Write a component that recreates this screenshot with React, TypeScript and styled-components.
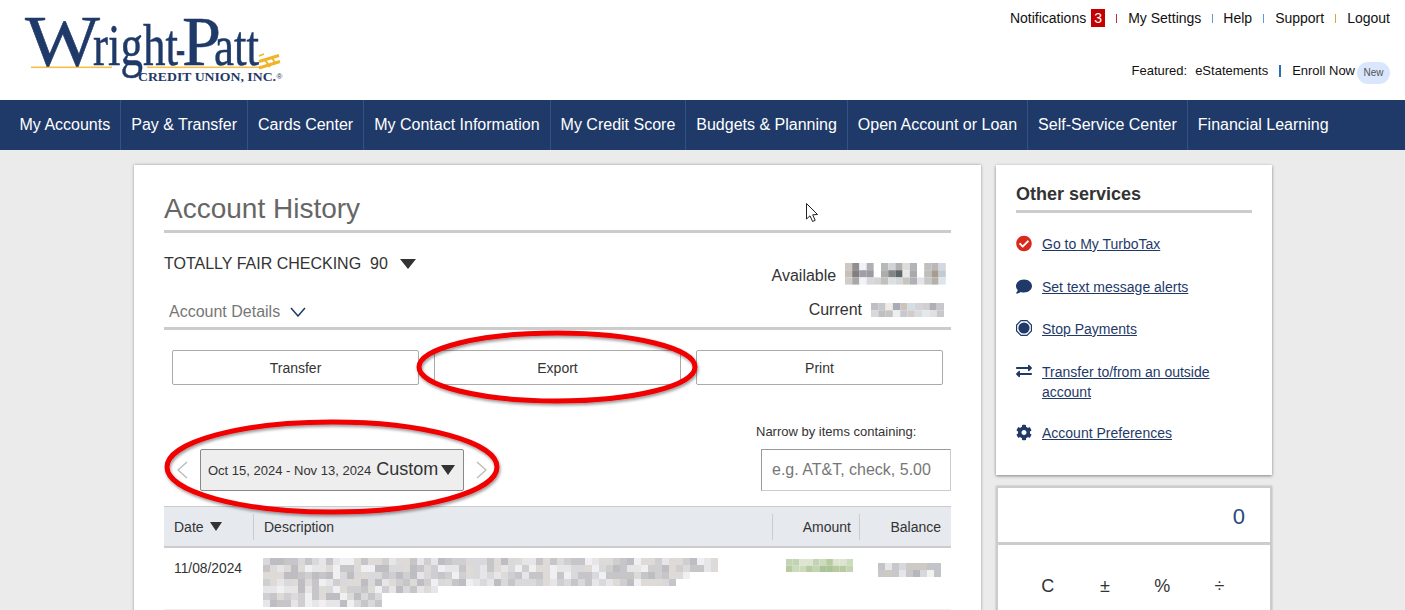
import React from "react";
import styled, { createGlobalStyle } from "styled-components";
import { FaCheckCircle, FaComment, FaExchangeAlt, FaCog } from "react-icons/fa";

const Global = createGlobalStyle`
  html, body { margin: 0; padding: 0; height: 610px; overflow: hidden; background: #ebebeb; }
  body { font-family: "Liberation Sans", Arial, sans-serif; color: #333; }
  * { box-sizing: border-box; }
`;

const Page = styled.div`
  position: relative;
  width: 1405px;
  height: 610px;
  overflow: hidden;
`;

const Header = styled.header`
  height: 100px;
  background: #fff;
  display: flex;
  justify-content: space-between;
  padding-right: 15px;
`;

const LogoSvg = styled.svg`
  display: block;
  width: 300px;
  height: 100px;
  flex: none;
`;

const HeaderRight = styled.div`
  display: flex;
  flex-direction: column;
  align-items: flex-end;
`;

const TopLinks = styled.div`
  display: flex;
  align-items: center;
  height: 18px;
  margin-top: 9px;
  font-size: 14px;
  color: #111;
`;

const Badge = styled.span`
  display: inline-flex;
  align-items: center;
  justify-content: center;
  width: 14px;
  height: 18px;
  margin-left: 5px;
  background: #c40000;
  color: #fff;
  font-size: 14px;
`;

const Tick = styled.span<{ $color: string; $gap?: number }>`
  display: block;
  width: 1px;
  height: 9px;
  margin: 0 ${(p) => p.$gap ?? 11}px;
  background: ${(p) => p.$color};
`;

const FeaturedRow = styled.div`
  display: flex;
  align-items: flex-start;
  margin-top: 35px;
  height: 22px;
  font-size: 13px;
  line-height: 18px;
  color: #111;
`;

const FeaturedLabel = styled.span`
  margin-right: 8px;
`;

const Pipe = styled.span`
  width: 2px;
  height: 12px;
  margin: 3px 11px 0;
  background: #2b6cb0;
`;

const NewPill = styled.span`
  display: inline-flex;
  align-items: center;
  justify-content: center;
  width: 33px;
  height: 22px;
  margin-left: 2px;
  border-radius: 11px;
  background: #d9e6fb;
  color: #555;
  font-size: 10px;
`;

const Nav = styled.nav`
  height: 50px;
  background: #1f3a68;
  display: flex;
  padding-left: 9.5px;
`;

const NavItem = styled.a`
  display: flex;
  align-items: center;
  padding: 0 10px;
  color: #fff;
  font-size: 16px;
  white-space: nowrap;
  border-right: 1px solid #2f5288;
  &:last-child { border-right: 0; }
`;

const Content = styled.main`
  display: flex;
  align-items: flex-start;
  gap: 15px;
  padding: 15px 0 0 134px;
`;

const MainCard = styled.section`
  width: 847px;
  height: 600px;
  flex: none;
  background: #fff;
  padding: 26px 30px 0;
  box-shadow: 0 0 3px rgba(0, 0, 0, 0.35);
`;

const Title = styled.h1`
  margin: 0;
  height: 42px;
  font-size: 28px;
  line-height: 36px;
  font-weight: 400;
  color: #666;
  border-bottom: 3px solid #ccc;
`;

const AccountBlock = styled.div`
  display: flex;
  justify-content: space-between;
  height: 97px;
  border-bottom: 3px solid #ccc;
`;

const AccountLeft = styled.div`
  display: flex;
  flex-direction: column;
`;

const AccountName = styled.div`
  display: flex;
  align-items: center;
  margin-top: 22px;
  height: 18px;
  font-size: 16px;
  color: #333;
  white-space: pre;
`;

const Triangle = styled.span<{ $w: number; $h: number; $ml: number }>`
  display: inline-block;
  width: 0;
  height: 0;
  margin-left: ${(p) => p.$ml}px;
  border-left: ${(p) => p.$w / 2}px solid transparent;
  border-right: ${(p) => p.$w / 2}px solid transparent;
  border-top: ${(p) => p.$h}px solid #333;
`;

const DetailsToggle = styled.div`
  display: flex;
  align-items: center;
  gap: 10px;
  margin-top: 30px;
  padding-left: 5px;
  height: 18px;
  font-size: 16px;
  color: #777;
`;

const Balances = styled.div`
  display: flex;
  flex-direction: column;
  align-items: flex-end;
  padding-top: 30px;
`;

const BalanceLine = styled.div<{ $mt: number; $pr: number; $align: string }>`
  display: flex;
  align-items: ${(p) => p.$align};
  gap: 9px;
  margin-top: ${(p) => p.$mt}px;
  padding-right: ${(p) => p.$pr}px;
  font-size: 16px;
  line-height: 18px;
  color: #333;
`;

const Actions = styled.div`
  display: flex;
  gap: 15px;
  padding: 0 8px;
  margin-top: 20px;
`;

const ActionButton = styled.button`
  width: 247px;
  height: 35px;
  padding: 0;
  background: #fff;
  border: 1px solid #aaa;
  border-radius: 2px;
  font: 14px "Liberation Sans", Arial, sans-serif;
  color: #333;
`;

const FilterRow = styled.div`
  display: flex;
  justify-content: space-between;
  align-items: flex-end;
  margin-top: 39px;
  height: 67px;
`;

const RangeGroup = styled.div`
  display: flex;
  align-items: center;
  height: 42px;
  padding-left: 13px;
  gap: 12px;
`;

const RangeButton = styled.button`
  display: flex;
  align-items: center;
  width: 264px;
  height: 42px;
  padding: 0 0 0 7px;
  background: #eee;
  border: 1px solid #888;
  border-radius: 2px;
  font-family: "Liberation Sans", Arial, sans-serif;
  color: #333;
  white-space: nowrap;
`;

const RangeDates = styled.span`
  font-size: 13px;
  margin-right: 5px;
`;

const RangeName = styled.span`
  font-size: 18px;
  margin-top: -1px;
`;

const SearchGroup = styled.div`
  display: flex;
  flex-direction: column;
  align-items: flex-end;
`;

const SearchLabel = styled.label`
  font-size: 13px;
  width: 195px;
  height: 25px;
  line-height: 15px;
  color: #333;
  white-space: nowrap;
`;

const SearchInput = styled.input`
  width: 190px;
  height: 42px;
  padding: 0 0 0 10px;
  border: 1px solid #ccc;
  border-top: 1px solid #999;
  border-left: 1px solid #999;
  font: 16px "Liberation Sans", Arial, sans-serif;
  &::placeholder { color: #777; opacity: 1; }
`;

const TableHead = styled.div`
  display: grid;
  grid-template-columns: 90px 519px 87px 1fr;
  align-items: center;
  height: 42px;
  margin-top: 15px;
  background: #e6e9ee;
  border-top: 1px solid #ccc;
  border-bottom: 2px solid #ccc;
  font-size: 14px;
  color: #333;
`;

const HeadCell = styled.div<{ $right?: number; $divider?: boolean }>`
  display: flex;
  align-items: center;
  height: 26px;
  padding: 0 ${(p) => p.$right ?? 10}px 0 10px;
  justify-content: ${(p) => (p.$right ? "flex-end" : "flex-start")};
  border-right: ${(p) => (p.$divider ? "1px solid #ccc" : "0")};
`;

const TableRow = styled.div`
  display: grid;
  grid-template-columns: 99px 523px 92px 1fr;
  height: 62px;
  border-bottom: 1px solid #eee;
  font-size: 13.8px;
  color: #333;
`;

const DateCell = styled.div`
  padding: 13px 0 0 10px;
`;

const MosaicCell = styled.div<{ $pt: number }>`
  padding-top: ${(p) => p.$pt}px;
`;

const Side = styled.aside`
  display: flex;
  flex-direction: column;
  gap: 11px;
  width: 276px;
  flex: none;
`;

const ServicesCard = styled.section`
  height: 310px;
  background: #fff;
  padding: 19px 20px 0;
  box-shadow: 0 1px 3px rgba(0, 0, 0, 0.45);
`;

const ServicesTitle = styled.h2`
  margin: 0 0 21px;
  height: 29px;
  font-size: 18px;
  line-height: 20px;
  font-weight: 700;
  color: #333;
  border-bottom: 3px solid #ccc;
`;

const ServiceList = styled.ul`
  list-style: none;
  margin: 0;
  padding: 0;
`;

const ServiceItem = styled.li<{ $mb: number }>`
  display: flex;
  align-items: flex-start;
  gap: 10px;
  margin-bottom: ${(p) => p.$mb}px;
  font-size: 14px;
  line-height: 20px;
`;

const ServiceIcon = styled.span<{ $color?: string; $size?: number }>`
  display: flex;
  width: 16px;
  height: 18px;
  flex: none;
  align-items: center;
  justify-content: center;
  color: ${(p) => p.$color ?? "#1f3a68"};
  font-size: ${(p) => p.$size ?? 16}px;
`;

const ServiceLink = styled.a`
  color: #1f3a68;
  text-decoration: underline;
`;

const CalcCard = styled.section`
  height: 140px;
  background: #fff;
  border: 2px solid #ccc;
  border-bottom: 0;
  box-shadow: 0 0 2px rgba(0, 0, 0, 0.25);
`;

const CalcDisplay = styled.div`
  height: 57px;
  padding: 16px 25px 0 0;
  text-align: right;
  font-size: 22px;
  line-height: 26px;
  color: #1f4a80;
  border-bottom: 3px solid #ccc;
`;

const CalcKeys = styled.div`
  display: grid;
  grid-template-columns: repeat(4, 57.3px);
  padding: 30px 0 0 21px;
  font-size: 18px;
  line-height: 22px;
  color: #333;
`;

const CalcKey = styled.span`
  text-align: center;
`;

const Overlay = styled.svg`
  position: absolute;
  inset: 0;
  width: 1405px;
  height: 610px;
  pointer-events: none;
`;

function makeRand(seed: number) {
  let s = seed;
  return () => {
    s = (s * 16807) % 2147483647;
    return (s - 1) / 2147483646;
  };
}

function Mosaic({ rows, cell = 7, seed, palette }: { rows: [number, number][]; cell?: number; seed: number; palette: string[] }) {
  const rand = makeRand(seed);
  const width = Math.max(...rows.map((r) => r[0] + r[1])) * cell;
  return (
    <svg width={width} height={rows.length * cell} style={{ display: "block", flex: "none" }} aria-hidden>
      {rows.map(([start, count], y) =>
        Array.from({ length: count }, (_, i) => (
          <rect
            key={`${y}-${i}`}
            x={(start + i) * cell}
            y={y * cell}
            width={cell}
            height={cell}
            fill={palette[Math.floor(rand() * palette.length)]}
          />
        ))
      )}
    </svg>
  );
}

function ColorGrid({ grid, cell }: { grid: string[][]; cell: number }) {
  return (
    <svg width={grid[0].length * cell} height={grid.length * cell} style={{ display: "block", flex: "none" }} aria-hidden>
      {grid.map((row, y) =>
        row.map((c, x) => <rect key={`${y}-${x}`} x={x * cell} y={y * cell} width={cell} height={cell} fill={c} />)
      )}
    </svg>
  );
}

const availableGrid = [
  ["#cfc8c2", "#8f8f90", "#f0f2f5", "#aeb0b6", "#ffffff", "#b9b8b8", "#d0d3d8", "#b0b0b0", "#e0dcd8", "#b0b4b8", "#ffffff", "#c0c0c0", "#b8b8b8", "#d4d8de"],
  ["#c8c0b8", "#7f7f7f", "#a0a0a4", "#9a9aa0", "#ffffff", "#adadad", "#858585", "#5f6668", "#e8e8e8", "#aaaaaa", "#ffffff", "#c0bdbb", "#a89c90", "#c0ccd4"],
  ["#d0ccc8", "#a8a8a8", "#f0f4fa", "#d8d8dc", "#d4d4d4", "#c0c0bc", "#dcdfe0", "#d4d8d8", "#c8c4be", "#b0b0b8", "#e4e4e4", "#c4c8c8", "#b4b0ac", "#dfe4ea"],
];

const currentGrid = [
  ["#bcc0c4", "#c8c8cc", "#f0ece4", "#a8acb8", "#ccc4bc", "#d4dce4", "#d4d4d8", "#d0d0d4", "#b0b0b4", "#c8c8cc"],
  ["#d8d8d8", "#c0c0c0", "#c4c4c4", "#eeeeee", "#c8c8d0", "#d4ccc8", "#d8dce0", "#e4e8ec", "#e0e0e0", "#c8c8cc"],
];

const greyMid = ["#c2c4c8", "#d6d8dc", "#e4e6ea", "#b4b8bd", "#cfc9c4", "#c8c8ca", "#f4f2ee"];
const greyLight = ["#d9d9dc", "#e6e6e8", "#cfcfd2", "#f0f0f2", "#c6c6c8", "#dedad8", "#bdbdc2"];
const greens = ["#c2d4b4", "#dde4cf", "#8fb07d", "#b8cba0", "#a9c497", "#cbdcbc"];

const navItems = [
  "My Accounts", "Pay & Transfer", "Cards Center", "My Contact Information", "My Credit Score",
  "Budgets & Planning", "Open Account or Loan", "Self-Service Center", "Financial Learning",
];

function Logo() {
  return (
    <LogoSvg viewBox="0 0 300 100" aria-label="Wright-Patt Credit Union, Inc.">
      <rect x="31" y="66.5" width="81" height="1.6" fill="#f4c14d" />
      <rect x="147" y="66.5" width="114" height="1.6" fill="#f4c14d" />
      <text
        y="64.5"
        fontFamily="'Liberation Serif', serif"
        fill="#1f3a68"
        stroke="#1f3a68"
        strokeWidth="0.5"
      >
        <tspan x="25" fontSize="72" textLength="75" lengthAdjust="spacingAndGlyphs">W</tspan>
        <tspan x="93" fontSize="60" textLength="85" lengthAdjust="spacingAndGlyphs">right</tspan>
        <tspan x="176" fontSize="50" textLength="9" lengthAdjust="spacingAndGlyphs">-</tspan>
        <tspan x="182" fontSize="70" textLength="39" lengthAdjust="spacingAndGlyphs">P</tspan>
        <tspan x="214" fontSize="58" textLength="45" lengthAdjust="spacingAndGlyphs">att</tspan>
      </text>
      <text x="138" y="81" fontFamily="'Liberation Serif', serif" fontSize="13.5" fontWeight="700" fill="#1f3a68" textLength="138" lengthAdjust="spacingAndGlyphs">CREDIT UNION, INC.</text>
      <text x="276.5" y="78.5" fontFamily="'Liberation Sans', sans-serif" fontSize="8" fill="#1f3a68">®</text>
      <g stroke="#f0b429" fill="none">
        <path d="M259 61.5 L279 55.5" strokeWidth="3" />
        <path d="M259 68 L280 61.5" strokeWidth="3" />
        <path d="M265 60 L270 67" strokeWidth="2" />
        <path d="M272 58 L276 64" strokeWidth="2" />
        <path d="M259 56 L264 54" strokeWidth="1.4" />
      </g>
    </LogoSvg>
  );
}

function Chevron({ dir, color, w = 11, h = 18 }: { dir: "left" | "right"; color: string; w?: number; h?: number }) {
  const d = dir === "left" ? `M${w - 1} 1 L1 ${h / 2} L${w - 1} ${h - 1}` : `M1 1 L${w - 1} ${h / 2} L1 ${h - 1}`;
  return (
    <svg width={w} height={h} style={{ flex: "none" }} aria-hidden>
      <path d={d} fill="none" stroke={color} strokeWidth="1.4" />
    </svg>
  );
}

function StopIcon() {
  return (
    <svg width="16" height="16" viewBox="0 0 16 16" aria-hidden>
      <path d="M5 .6h6L15.4 5v6L11 15.4H5L.6 11V5z" fill="none" stroke="#1f3a68" strokeWidth="1.2" />
      <circle cx="8" cy="8" r="5.6" fill="#1f3a68" />
    </svg>
  );
}

export default function App() {
  return (
    <Page>
      <Global />
      <Header>
        <Logo />
        <HeaderRight>
          <TopLinks>
            <span>Notifications</span>
            <Badge>3</Badge>
            <Tick $color="#b03050" />
            <span>My Settings</span>
            <Tick $color="#5b9bd5" $gap={10.5} />
            <span>Help</span>
            <Tick $color="#5b9bd5" $gap={11} />
            <span>Support</span>
            <Tick $color="#e0a040" $gap={11} />
            <span>Logout</span>
          </TopLinks>
          <FeaturedRow>
            <FeaturedLabel>Featured:</FeaturedLabel>
            <span>eStatements</span>
            <Pipe />
            <span>Enroll Now</span>
            <NewPill>New</NewPill>
          </FeaturedRow>
        </HeaderRight>
      </Header>
      <Nav>
        {navItems.map((n) => (
          <NavItem key={n}>{n}</NavItem>
        ))}
      </Nav>
      <Content>
        <MainCard>
          <Title>Account History</Title>
          <AccountBlock>
            <AccountLeft>
              <AccountName>
                TOTALLY FAIR CHECKING  90
                <Triangle $w={16} $h={10} $ml={12} />
              </AccountName>
              <DetailsToggle>
                Account Details
                <svg width="16" height="10" aria-hidden>
                  <path d="M1 1 L8 9 L15 1" fill="none" stroke="#1f3a68" strokeWidth="1.5" />
                </svg>
              </DetailsToggle>
            </AccountLeft>
            <Balances>
              <BalanceLine $mt={0} $pr={5} $align="flex-end">
                Available
                <ColorGrid grid={availableGrid} cell={7.2} />
              </BalanceLine>
              <BalanceLine $mt={16.5} $pr={7} $align="center">
                Current
                <ColorGrid grid={currentGrid} cell={7.3} />
              </BalanceLine>
            </Balances>
          </AccountBlock>
          <Actions>
            <ActionButton>Transfer</ActionButton>
            <ActionButton>Export</ActionButton>
            <ActionButton>Print</ActionButton>
          </Actions>
          <FilterRow>
            <RangeGroup>
              <Chevron dir="left" color="#bbb" />
              <RangeButton>
                <RangeDates>Oct 15, 2024 - Nov 13, 2024</RangeDates>
                <RangeName>Custom</RangeName>
                <Triangle $w={14} $h={10} $ml={3} />
              </RangeButton>
              <Chevron dir="right" color="#bbb" />
            </RangeGroup>
            <SearchGroup>
              <SearchLabel>Narrow by items containing:</SearchLabel>
              <SearchInput placeholder="e.g. AT&T, check, 5.00" />
            </SearchGroup>
          </FilterRow>
          <TableHead>
            <HeadCell $divider>
              Date
              <Triangle $w={12} $h={9} $ml={6} />
            </HeadCell>
            <HeadCell $divider>Description</HeadCell>
            <HeadCell $right={8} $divider>Amount</HeadCell>
            <HeadCell $right={10}>Balance</HeadCell>
          </TableHead>
          <TableRow>
            <DateCell>11/08/2024</DateCell>
            <MosaicCell $pt={10}>
              <Mosaic
                seed={311}
                palette={greyLight}
                rows={[[0, 65], [0, 65], [0, 61], [0, 59], [0, 25], [0, 17], [0, 17]]}
              />
            </MosaicCell>
            <MosaicCell $pt={11}>
              <Mosaic seed={77} palette={greens} rows={[[0, 10], [0, 10]]} cell={6.7} />
            </MosaicCell>
            <MosaicCell $pt={15}>
              <Mosaic seed={140} palette={greyMid} rows={[[0, 9], [0, 9]]} cell={7} />
            </MosaicCell>
          </TableRow>
        </MainCard>
        <Side>
          <ServicesCard>
            <ServicesTitle>Other services</ServicesTitle>
            <ServiceList>
              <ServiceItem $mb={23}>
                <ServiceIcon $color="#d9291c" $size={17}><FaCheckCircle /></ServiceIcon>
                <ServiceLink>Go to My TurboTax</ServiceLink>
              </ServiceItem>
              <ServiceItem $mb={22}>
                <ServiceIcon $size={17}><FaComment /></ServiceIcon>
                <ServiceLink>Set text message alerts</ServiceLink>
              </ServiceItem>
              <ServiceItem $mb={23}>
                <ServiceIcon><StopIcon /></ServiceIcon>
                <ServiceLink>Stop Payments</ServiceLink>
              </ServiceItem>
              <ServiceItem $mb={21}>
                <ServiceIcon><FaExchangeAlt /></ServiceIcon>
                <ServiceLink>Transfer to/from an outside<br />account</ServiceLink>
              </ServiceItem>
              <ServiceItem $mb={0}>
                <ServiceIcon $size={17}><FaCog /></ServiceIcon>
                <ServiceLink>Account Preferences</ServiceLink>
              </ServiceItem>
            </ServiceList>
          </ServicesCard>
          <CalcCard>
            <CalcDisplay>0</CalcDisplay>
            <CalcKeys>
              <CalcKey>C</CalcKey>
              <CalcKey>±</CalcKey>
              <CalcKey>%</CalcKey>
              <CalcKey>÷</CalcKey>
            </CalcKeys>
          </CalcCard>
        </Side>
      </Content>
      <Overlay viewBox="0 0 1405 610" aria-hidden>
        <defs>
          <filter id="inkShadow" x="-5%" y="-15%" width="110%" height="130%">
            <feDropShadow dx="1" dy="2" stdDeviation="1.5" floodColor="#000" floodOpacity="0.4" />
          </filter>
        </defs>
        <g fill="none" stroke="#f00000" strokeWidth="5" filter="url(#inkShadow)">
          <ellipse cx="557" cy="367" rx="138" ry="34" />
          <ellipse cx="332" cy="467" rx="165" ry="45" />
        </g>
        <path
          d="M806.5 203.5 V219 L810 215.8 L812.6 221.5 L815.2 220.3 L812.7 214.8 L817.5 214.5 Z"
          fill="#fff"
          stroke="#222"
          strokeWidth="1"
        />
      </Overlay>
    </Page>
  );
}
